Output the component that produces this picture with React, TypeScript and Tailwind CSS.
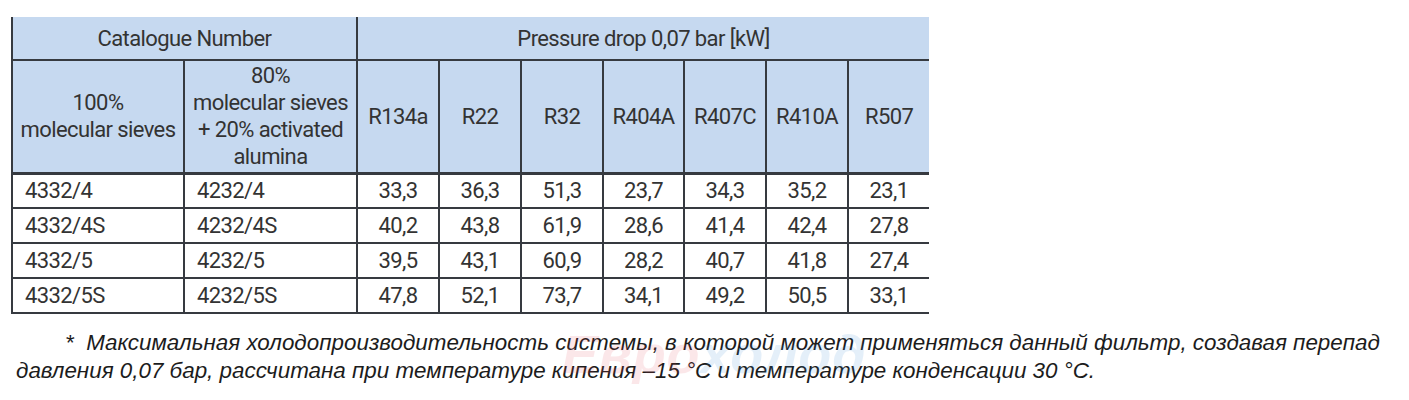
const refrigerants = ['R134a', 'R22', 'R32', 'R404A', 'R407C', 'R410A', 'R507'];

const rows = [
  { a: '4332/4', b: '4232/4', v: ['33,3', '36,3', '51,3', '23,7', '34,3', '35,2', '23,1'] },
  { a: '4332/4S', b: '4232/4S', v: ['40,2', '43,8', '61,9', '28,6', '41,4', '42,4', '27,8'] },
  { a: '4332/5', b: '4232/5', v: ['39,5', '43,1', '60,9', '28,2', '40,7', '41,8', '27,4'] },
  { a: '4332/5S', b: '4232/5S', v: ['47,8', '52,1', '73,7', '34,1', '49,2', '50,5', '33,1'] },
];

const colW = ['w-[172px]', 'w-[173px]', 'w-[82px]', 'w-[82px]', 'w-[82px]', 'w-[81px]', 'w-[82px]', 'w-[82px]', 'w-[81px]'];

export default function App() {
  return (
    <div className="relative w-[1409px] h-[400px] bg-white overflow-hidden">
      <div className="pt-[17px] pl-[11px]">
        <table className="border-collapse table-fixed w-[918px] text-[22px] leading-[27px] text-[#333333] font-['Roboto',sans-serif] tracking-[-0.6px]">
          <colgroup>
            {colW.map((w, i) => (
              <col key={i} className={w} />
            ))}
          </colgroup>
          <thead>
            <tr className="h-[43px] bg-[#c6d9f0]">
              <th colSpan={2} className="font-normal text-center border-l-2 border-r-2 border-b-2 border-[#363a40]">
                Catalogue Number
              </th>
              <th colSpan={7} className="font-normal text-center border-b-2 border-[#363a40]">
                Pressure drop 0,07 bar [kW]
              </th>
            </tr>
            <tr className="h-[113px] bg-[#c6d9f0]">
              <th className="font-normal text-center border-l-2 border-r-2 border-b-[3px] border-[#363a40]">
                100%
                <br />
                molecular sieves
              </th>
              <th className="font-normal text-center border-r-2 border-b-[3px] border-[#363a40]">
                80%
                <br />
                molecular sieves
                <br />+ 20% activated
                <br />
                alumina
              </th>
              {refrigerants.map((r, i) => (
                <th
                  key={r}
                  className={
                    i < refrigerants.length - 1
                      ? 'font-normal text-center border-r-2 border-b-[3px] border-[#363a40]'
                      : 'font-normal text-center border-b-[3px] border-[#363a40]'
                  }
                >
                  {r}
                </th>
              ))}
            </tr>
          </thead>
          <tbody>
            {rows.map((row) => (
              <tr key={row.a} className="h-[35px]">
                <td className="pl-[12px] border-l-2 border-r-2 border-b-2 border-[#363a40]">{row.a}</td>
                <td className="pl-[12px] border-r-2 border-b-2 border-[#363a40]">{row.b}</td>
                {row.v.map((v, i) => (
                  <td
                    key={i}
                    className={
                      i < row.v.length - 1
                        ? 'text-center border-r-2 border-b-2 border-[#363a40]'
                        : 'text-center border-b-2 border-[#363a40]'
                    }
                  >
                    {v}
                  </td>
                ))}
              </tr>
            ))}
          </tbody>
        </table>
      </div>

      <p className="mt-[15px] pl-[16px] pr-[8px] indent-[49px] italic text-[22.4px] leading-[28px] text-[#1c1c1c] font-['Liberation_Sans',sans-serif]">
        *&nbsp; Максимальная холодопроизводительность системы, в которой может применяться данный фильтр, создавая перепад давления 0,07 бар, рассчитана при температуре кипения –15 °C и температуре конденсации 30 °C.
      </p>

      {/* watermark */}
      <div className="absolute left-[562px] top-[326px] flex italic font-bold text-[54px] leading-[56px] tracking-[1px] font-['Liberation_Sans',sans-serif] opacity-[0.13] pointer-events-none select-none">
        <span className="text-[#e8505f]">Евро</span>
        <span className="text-[#3b8ed8]">холод</span>
      </div>
    </div>
  );
}
